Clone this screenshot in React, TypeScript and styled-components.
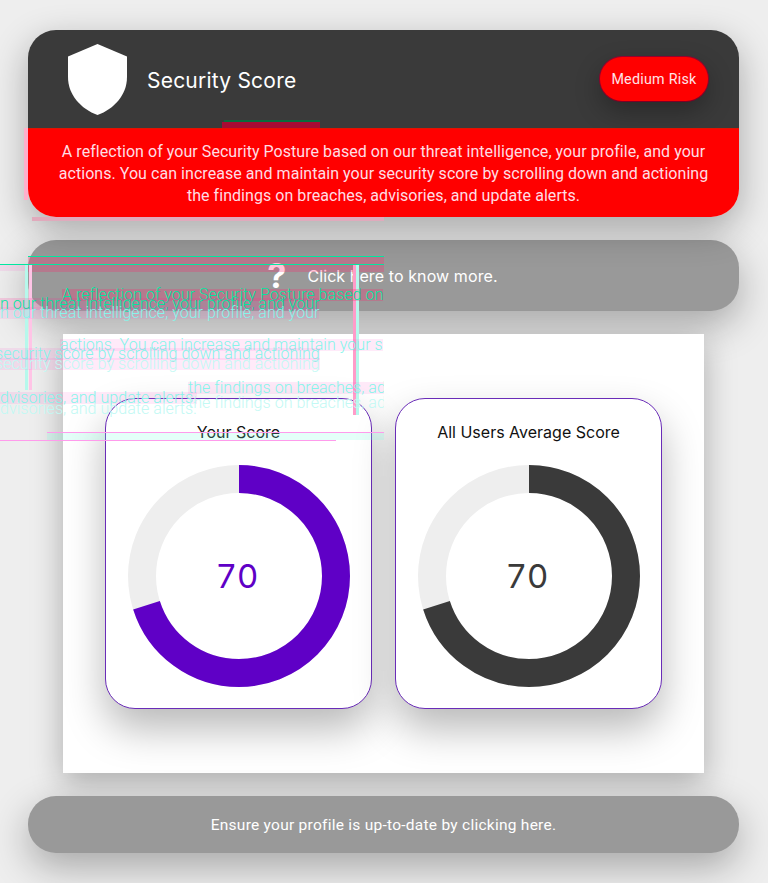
import React from "react";
import styled, { createGlobalStyle } from "styled-components";

const Global = createGlobalStyle`
  html, body { margin: 0; padding: 0; background: #eeeeee; }
  body { font-family: "Roboto", "Liberation Sans", sans-serif; }
`;

const Page = styled.main`
  position: relative;
  width: 768px;
  height: 883px;
  overflow: hidden;
  box-sizing: border-box;
  padding: 30px 29px 0 28px;
  display: flex;
  flex-direction: column;
  gap: 23px;
`;

const ScoreCard = styled.section`
  position: relative;
  height: 187px;
  border-radius: 28px;
  overflow: hidden;
  flex: none;
  box-shadow: 0 12px 36px rgba(0, 0, 0, 0.3);
  display: flex;
  flex-direction: column;
`;

const Header = styled.header`
  height: 98px;
  background: #3a3a3a;
  display: flex;
  align-items: center;
  padding: 0 31px 0 40px;
  flex: none;
`;

const Title = styled.h1`
  margin: 3px 0 0 20px;
  flex: 1;
  font: 400 21px/1 "Inter", "Liberation Sans", sans-serif;
  letter-spacing: 0.22px;
  color: #fff;
`;

const RiskPill = styled.div`
  width: 108px;
  height: 44px;
  border-radius: 22px;
  background: #ff0000;
  color: #ffe3e8;
  font-size: 14.3px;
  letter-spacing: 0.25px;
  display: flex;
  align-items: center;
  justify-content: center;
  box-shadow: 0 10px 26px rgba(0, 0, 0, 0.3), 0 0 0 1px #a3002f;
`;

const Description = styled.p`
  margin: 0;
  flex: 1;
  background: #ff0000;
  border-top: 1px solid #e01400;
  box-sizing: border-box;
  color: #ffdde4;
  font-size: 16px;
  line-height: 22px;
  letter-spacing: 0.05px;
  text-align: center;
  padding: 12px 20px 0;
`;

const GreyBar = styled.div<{ $height: number }>`
  height: ${(p) => p.$height}px;
  flex: none;
  border-radius: 28px;
  background: #999999;
  color: #fff;
  display: flex;
  align-items: center;
  justify-content: center;
  box-shadow: 0 14px 38px rgba(0, 0, 0, 0.3);
`;

const Question = styled.span`
  font: 700 34px/1 "Inter", "Liberation Sans", sans-serif;
  margin-right: 21px;
  margin-left: -2px;
`;

const KnowMore = styled.span`
  font: 400 16px/1 "Inter", "Liberation Sans", sans-serif;
  letter-spacing: 0.1px;
`;

const Ensure = styled.span`
  font-size: 15.5px;
  letter-spacing: 0.26px;
`;

const Panel = styled.section`
  flex: none;
  height: 439px;
  margin: 0 35px;
  background: #fff;
  box-shadow: 0 10px 30px rgba(0, 0, 0, 0.28);
  display: flex;
  justify-content: center;
  gap: 23px;
  padding-top: 64px;
  box-sizing: border-box;
`;

const ChartCard = styled.article`
  width: 267px;
  height: 311px;
  box-sizing: border-box;
  background: #fff;
  border: 1px solid #6a2cb8;
  border-radius: 30px;
  box-shadow: 0 20px 40px rgba(0, 0, 0, 0.28);
  display: flex;
  flex-direction: column;
  align-items: center;
  padding-top: 24px;
`;

const ChartTitle = styled.h2`
  margin: 0 0 24px;
  font: 400 16px/18px "Inter", "Liberation Sans", sans-serif;
  color: #111;
`;

const Ring = styled.div`
  position: relative;
  width: 222px;
  height: 222px;
`;

const RingValue = styled.span<{ $color: string }>`
  position: absolute;
  inset: 0;
  display: flex;
  align-items: center;
  justify-content: center;
  font: 400 33px/1 "Inter", "Liberation Sans", sans-serif;
  letter-spacing: 2px;
  color: ${(p) => p.$color};
`;

const GlitchLayer = styled.div`
  position: absolute;
  left: 0;
  top: 0;
  width: 384px;
  height: 450px;
  overflow: hidden;
  pointer-events: none;
`;

const GhostLine = styled.span<{ $x: number; $y: number; $color: string; $band: string }>`
  position: absolute;
  left: ${(p) => p.$x}px;
  top: ${(p) => p.$y}px;
  white-space: nowrap;
  font-size: 16px;
  font-weight: 300;
  line-height: 12px;
  letter-spacing: 0.05px;
  color: ${(p) => p.$color};
  background: ${(p) => p.$band};
`;

const Streak = styled.i<{ $x: number; $y: number; $w: number; $h: number; $color: string }>`
  position: absolute;
  left: ${(p) => p.$x}px;
  top: ${(p) => p.$y}px;
  width: ${(p) => p.$w}px;
  height: ${(p) => p.$h}px;
  background: ${(p) => p.$color};
`;

const CYAN = "#86f5ea";
const PALE = "#c2f9f4";
const GREEN = "#00e8a0";
const PINK = "rgba(255, 60, 200, 0.11)";
const ROSE = "rgba(255, 40, 110, 0.28)";

const line1 = "A reflection of your Security Posture based on";
const line1b = "n our threat intelligence, your profile, and your";
const line2 = "actions. You can increase and maintain your s";
const line2b = "security score by scrolling down and actioning";
const line3 = "the findings on breaches, ad";
const line3b = "dvisories, and update alerts.";

const ghosts = [
  { x: 62, y: 289, text: line1, color: GREEN, band: ROSE },
  { x: 0, y: 298, text: line1b, color: GREEN, band: "rgba(255, 40, 150, 0.18)" },
  { x: 0, y: 307, text: line1b, color: CYAN, band: PINK },
  { x: 60, y: 339, text: line2, color: CYAN, band: PINK },
  { x: -5, y: 348, text: line2b, color: CYAN, band: PINK },
  { x: -5, y: 358, text: line2b, color: PALE, band: PINK },
  { x: 188, y: 382, text: line3, color: CYAN, band: PINK },
  { x: 0, y: 392, text: line3b, color: CYAN, band: PINK },
  { x: 188, y: 397, text: line3, color: PALE, band: "transparent" },
  { x: 0, y: 403, text: line3b, color: PALE, band: "transparent" },
];

const streaks = [
  { x: 28, y: 256, w: 356, h: 1, color: GREEN },
  { x: 0, y: 264, w: 384, h: 1, color: GREEN },
  { x: 28, y: 257, w: 356, h: 7, color: ROSE },
  { x: 28, y: 265, w: 356, h: 7, color: ROSE },
  { x: 0, y: 265, w: 28, h: 6, color: PINK },
  { x: 25, y: 265, w: 3, h: 125, color: "#b6f8ec" },
  { x: 29, y: 265, w: 3, h: 125, color: "#ffc4e6" },
  { x: 353, y: 265, w: 3, h: 150, color: "#ff9cc9" },
  { x: 356, y: 265, w: 3, h: 150, color: "#b6f8ec" },
  { x: 47, y: 432, w: 337, h: 1, color: "#ff9bec" },
  { x: 0, y: 440, w: 336, h: 1, color: "#ff9bec" },
  { x: 47, y: 433, w: 337, h: 7, color: "rgba(120, 255, 225, 0.2)" },
  { x: 224, y: 120, w: 96, h: 2, color: "#0a6b3c" },
  { x: 222, y: 122, w: 98, h: 6, color: "#a80b33" },
  { x: 24, y: 128, w: 4, h: 72, color: "#ffb0cc" },
  { x: 32, y: 217, w: 352, h: 4, color: "#e0aabc" },
];

function Donut({ color }: { color: string }) {
  const r = 97;
  const c = 2 * Math.PI * r;
  return (
    <svg width="222" height="222" viewBox="0 0 222 222">
      <circle cx="111" cy="111" r={r} fill="none" stroke="#eeeeee" strokeWidth="28" />
      <circle
        cx="111"
        cy="111"
        r={r}
        fill="none"
        stroke={color}
        strokeWidth="28"
        strokeDasharray={`${c * 0.7} ${c}`}
        transform="rotate(-90 111 111)"
      />
    </svg>
  );
}

function Chart({ title, color }: { title: string; color: string }) {
  return (
    <ChartCard>
      <ChartTitle>{title}</ChartTitle>
      <Ring>
        <Donut color={color} />
        <RingValue $color={color}>70</RingValue>
      </Ring>
    </ChartCard>
  );
}

export default function App() {
  return (
    <Page>
      <Global />
      <ScoreCard>
        <Header>
          <svg width="59" height="71" viewBox="0 0 59 71" aria-hidden="true">
            <path
              d="M29.5 0 L59 12.5 V33 C59 51 46 65 29.5 71 C13 65 0 51 0 33 V12.5 Z"
              fill="#fff"
            />
          </svg>
          <Title>Security Score</Title>
          <RiskPill>Medium Risk</RiskPill>
        </Header>
        <Description>
          A reflection of your Security Posture based on our threat intelligence, your profile, and your
          actions. You can increase and maintain your security score by scrolling down and actioning the
          findings on breaches, advisories, and update alerts.
        </Description>
      </ScoreCard>
      <GreyBar $height={71}>
        <Question>?</Question>
        <KnowMore>Click here to know more.</KnowMore>
      </GreyBar>
      <Panel>
        <Chart title="Your Score" color="#5f00c6" />
        <Chart title="All Users Average Score" color="#3a3a3a" />
      </Panel>
      <GreyBar $height={57}>
        <Ensure>Ensure your profile is up-to-date by clicking here.</Ensure>
      </GreyBar>
      <GlitchLayer aria-hidden="true">
        {streaks.map((s, i) => (
          <Streak key={i} $x={s.x} $y={s.y} $w={s.w} $h={s.h} $color={s.color} />
        ))}
        {ghosts.map((g, i) => (
          <GhostLine key={i} $x={g.x} $y={g.y} $color={g.color} $band={g.band}>
            {g.text}
          </GhostLine>
        ))}
      </GlitchLayer>
    </Page>
  );
}
